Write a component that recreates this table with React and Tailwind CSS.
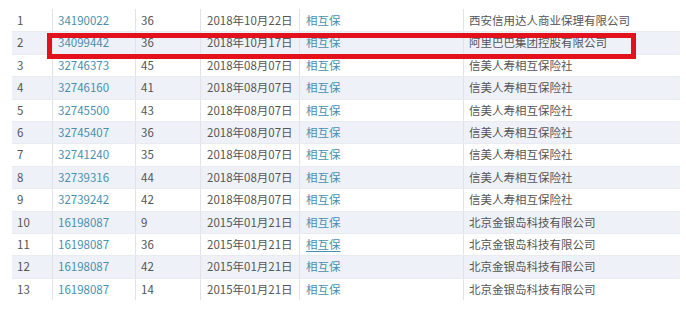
import React from 'react';

const rows = [
  ['1', '34190022', '36', '2018年10月22日', '西安信用达人商业保理有限公司'],
  ['2', '34099442', '36', '2018年10月17日', '阿里巴巴集团控股有限公司'],
  ['3', '32746373', '45', '2018年08月07日', '信美人寿相互保险社'],
  ['4', '32746160', '41', '2018年08月07日', '信美人寿相互保险社'],
  ['5', '32745500', '43', '2018年08月07日', '信美人寿相互保险社'],
  ['6', '32745407', '36', '2018年08月07日', '信美人寿相互保险社'],
  ['7', '32741240', '35', '2018年08月07日', '信美人寿相互保险社'],
  ['8', '32739316', '44', '2018年08月07日', '信美人寿相互保险社'],
  ['9', '32739242', '42', '2018年08月07日', '信美人寿相互保险社'],
  ['10', '16198087', '9', '2015年01月21日', '北京金银岛科技有限公司'],
  ['11', '16198087', '36', '2015年01月21日', '北京金银岛科技有限公司'],
  ['12', '16198087', '42', '2015年01月21日', '北京金银岛科技有限公司'],
  ['13', '16198087', '14', '2015年01月21日', '北京金银岛科技有限公司'],
];

export default function App() {
  return (
    <div
      className="relative w-[686px] h-[312px] bg-white overflow-hidden pt-[9px] pl-[12px] text-[11.5px] text-[#555]"
      style={{ fontFamily: '"Noto Sans CJK SC", "Noto Sans", sans-serif' }}
    >
      <div className="w-[668px]">
        {rows.map(([no, reg, cls, date, owner], i) => (
          <div
            key={no}
            className={`grid grid-cols-[40px_83px_65px_99px_164px_217px] h-[22.4px] ${
              i > 0 ? 'border-t border-[#e8ebef]' : ''
            } ${i % 2 === 1 ? 'bg-[#eef2f8]' : 'bg-white'}`}
          >
            <div className="flex items-center pl-[5px]">{no}</div>
            <div className="flex items-center pl-[5px] border-l border-[#e0e3e7] text-[#4a8fb0]">{reg}</div>
            <div className="flex items-center pl-[5px] border-l border-[#e0e3e7]">{cls}</div>
            <div className="flex items-center pl-[6px] border-l border-[#e0e3e7]">{date}</div>
            <div className="flex items-center pl-[6px] border-l border-[#e0e3e7] text-[#4a8fb0]">
              <span className={i === 10 ? 'underline underline-offset-2' : ''}>相互保</span>
            </div>
            <div className="flex items-center pl-[5px] border-l border-[#e0e3e7]">{owner}</div>
          </div>
        ))}
      </div>

      {/* highlight box */}
      <div className="absolute left-[47px] top-[33px] w-[589px] h-[26px] border-[5px] border-[#e3111b]" />
    </div>
  );
}
